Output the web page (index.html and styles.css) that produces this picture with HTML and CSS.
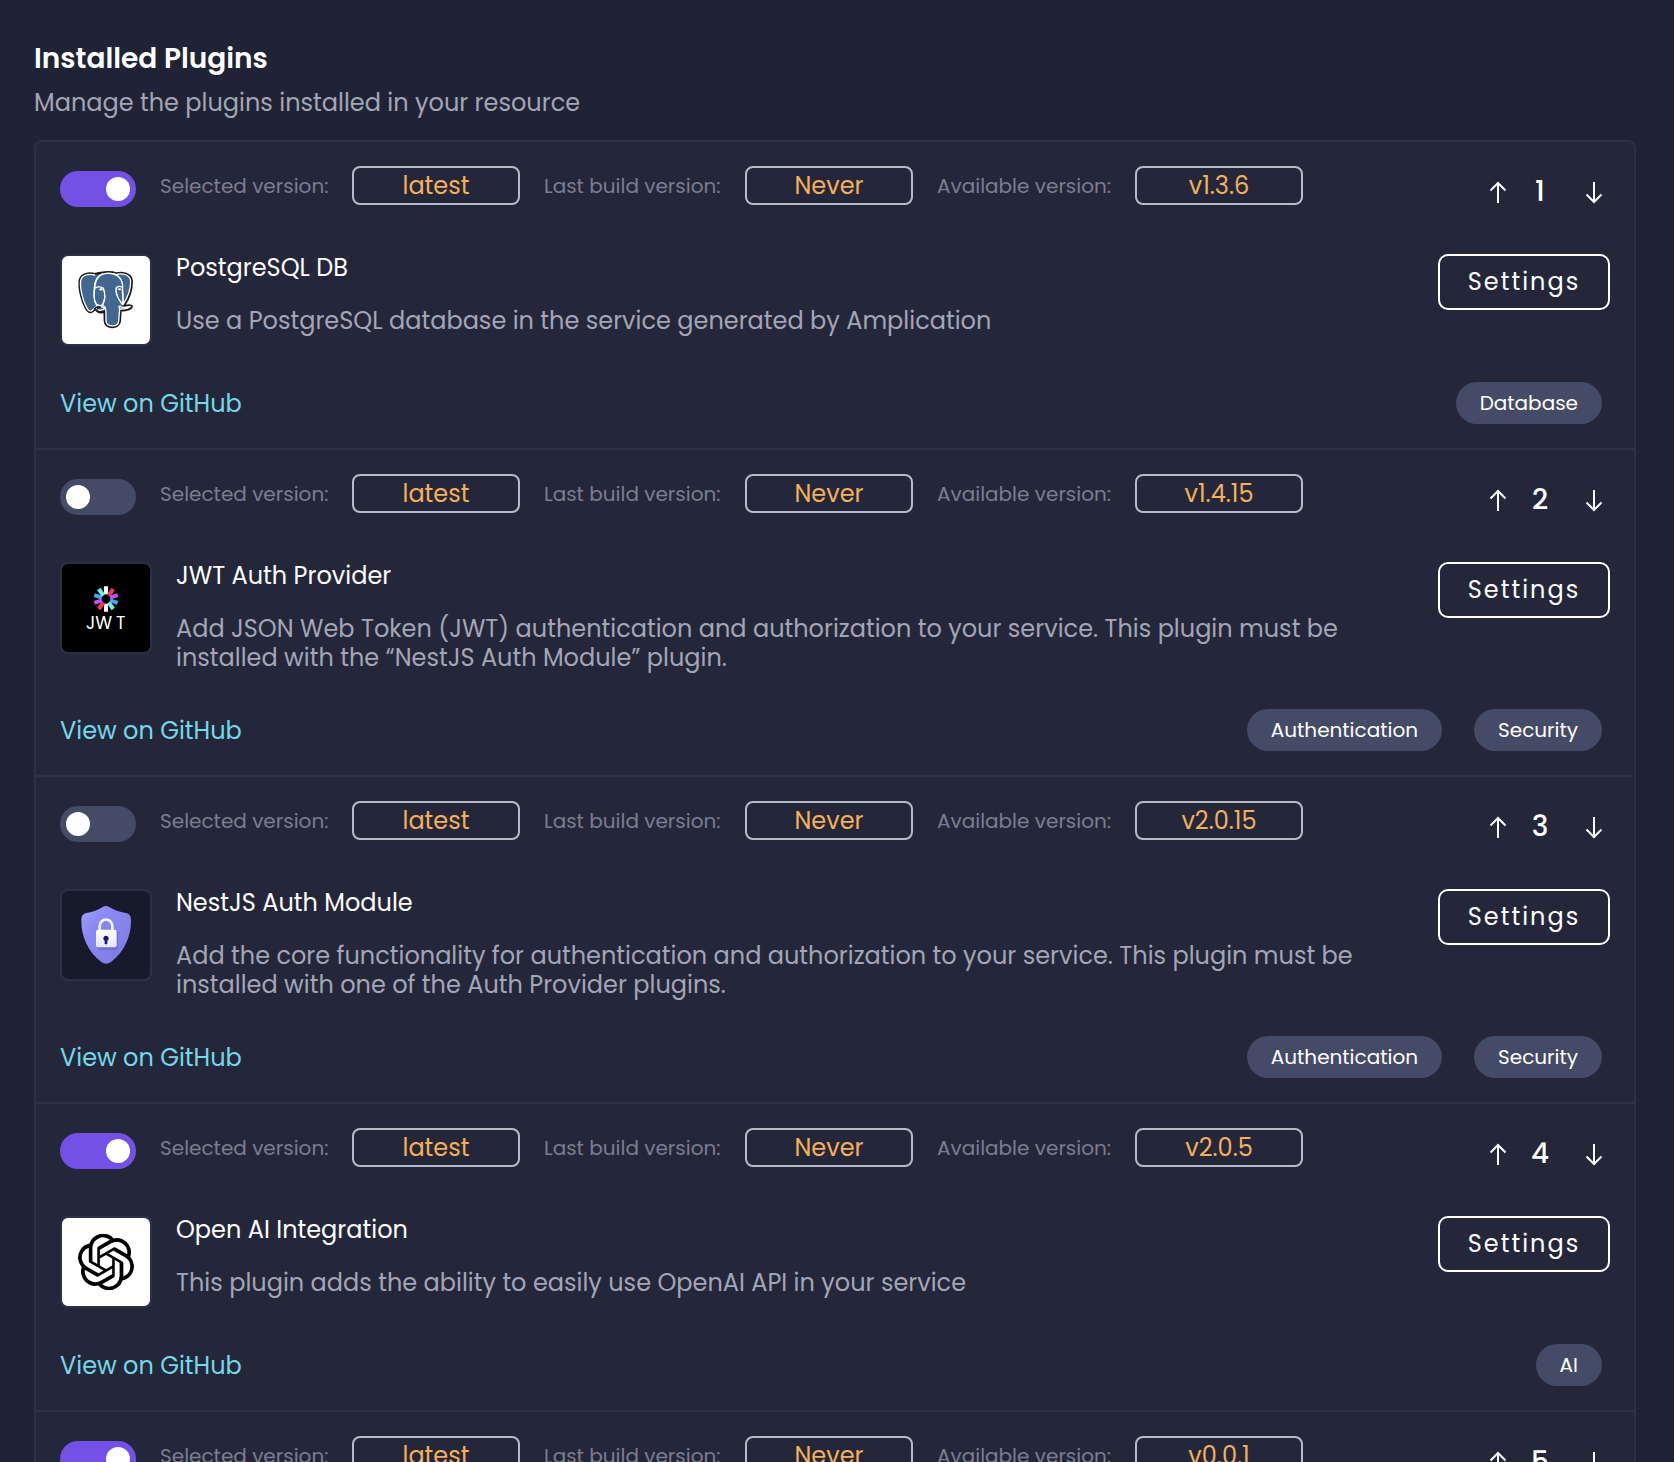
FILE: index.html
```html
<!DOCTYPE html>
<html lang="en">
<head>
<meta charset="utf-8">
<title>Installed Plugins</title>
<link rel="stylesheet" href="styles.css">
</head>
<body>
<svg class="sprite" aria-hidden="true">
  <symbol id="arrow-up" viewBox="0 0 20 24"><path d="M10 23V3M2.500 10.500 10 3 17.500 10.500"/></symbol>
  <symbol id="arrow-down" viewBox="0 0 20 24"><path d="M10 2v20M2.500 14.500 10 22 17.500 14.500"/></symbol>
</svg>
<main class="page">
  <header class="page-header">
    <h1 class="page-title">Installed Plugins</h1>
    <p class="page-subtitle">Manage the plugins installed in your resource</p>
  </header>

  <ul class="plugin-list">
    <li class="plugin">
      <div class="plugin-bar">
        <input class="toggle" type="checkbox" role="switch" aria-label="Enable PostgreSQL DB" checked>
        <dl class="versions">
          <dt>Selected version:</dt><dd>latest</dd>
          <dt>Last build version:</dt><dd>Never</dd>
          <dt>Available version:</dt><dd>v1.3.6</dd>
        </dl>
        <div class="order">
          <button class="order-button" aria-label="Move up"><svg><use href="#arrow-up"/></svg></button>
          <span class="order-number">1</span>
          <button class="order-button" aria-label="Move down"><svg><use href="#arrow-down"/></svg></button>
        </div>
      </div>
      <div class="plugin-body">
        <div class="logo logo-light">
          <svg viewBox="36 33 264 264" aria-hidden="true">
            <g stroke-linejoin="round" stroke-linecap="round">
              <path fill="#41668f" stroke="#1c1c1c" stroke-width="8" d="M134 88C119 84 94 85 90 106C86 131 97 168 106 185C112 198 119 203 126 199C132 196 136 191 140 188C136 201 153 203 164 200L165 229C165 250 207 252 209 229L211 196C223 196 243 193 245 184C239 180 229 184 222 181C235 162 245 133 245 108C243 86 217 82 199 86C181 79 147 83 134 88Z"/>
              <path fill="#41668f" stroke="#fff" stroke-width="4" d="M134 90C119 86 96 87 92 107C89 131 99 167 108 184C113 196 119 201 125 197C131 193 136 187 141 182C130 170 131 149 133 128C134 107 144 91 157 87M199 88C217 84 240 88 242 108C242 133 232 160 219 179C218 165 220 149 217 130C219 109 209 92 192 86"/>
              <path fill="#41668f" stroke="#fff" stroke-width="4" d="M134 130C136 103 145 87 169 85C198 83 216 98 218 123C215 140 221 157 218 178C204 162 196 146 198 130C203 122 213 123 217 128M134 130C143 124 154 125 160 130C166 143 167 165 157 179C152 185 142 180 139 177C131 167 132 146 134 130Z"/>
              <path fill="#41668f" stroke="none" d="M160 130C164 145 166 165 160 179L168 190V229C168 245 204 247 206 229L207 190L215 180C204 162 196 146 198 130Z"/>
              <path fill="none" stroke="#fff" stroke-width="4" d="M160 130C166 145 166 165 158 180C169 187 168 196 168 229C168 246 204 248 206 229L209 191C204 184 209 181 213 186C222 190 233 184 241 184C236 190 222 192 212 192M198 130C196 146 205 163 217 178M141 185C150 183 160 187 164 190C158 197 145 198 140 190"/>
              <path fill="none" stroke="#1c1c1c" stroke-width="4" d="M133 192C138 185 143 184 151 186L142 192"/>
            </g>
            <path fill="#fff" d="M147 132c4-3 9-3 12 0c-2 6-10 6-12 0zM203 132c3-3 8-3 11 0c-2 5-8 5-11 0z"/>
          </svg>
        </div>
        <div class="plugin-text">
          <h2 class="plugin-name">PostgreSQL DB</h2>
          <p class="plugin-description">Use a PostgreSQL database in the service generated by Amplication</p>
        </div>
        <button class="settings">Settings</button>
      </div>
      <footer class="plugin-footer">
        <a class="link" href="#">View on GitHub</a>
        <ul class="tags"><li>Database</li></ul>
      </footer>
    </li>

    <li class="plugin">
      <div class="plugin-bar">
        <input class="toggle" type="checkbox" role="switch" aria-label="Enable JWT Auth Provider">
        <dl class="versions">
          <dt>Selected version:</dt><dd>latest</dd>
          <dt>Last build version:</dt><dd>Never</dd>
          <dt>Available version:</dt><dd>v1.4.15</dd>
        </dl>
        <div class="order">
          <button class="order-button" aria-label="Move up"><svg><use href="#arrow-up"/></svg></button>
          <span class="order-number">2</span>
          <button class="order-button" aria-label="Move down"><svg><use href="#arrow-down"/></svg></button>
        </div>
      </div>
      <div class="plugin-body">
        <div class="logo logo-black">
          <svg viewBox="36 42 264 264" aria-hidden="true">
            <g transform="translate(168 147)" stroke-width="12">
              <path stroke="#fff" d="M0-14V-38M0 14V38"/>
              <path stroke="#f2355b" transform="rotate(36)" d="M0-13V-37M0 13V37"/>
              <path stroke="#c44df5" transform="rotate(72)" d="M0-13V-37M0 13V37"/>
              <path stroke="#48a9ea" transform="rotate(108)" d="M0-13V-37M0 13V37"/>
              <path stroke="#6ff0e4" transform="rotate(144)" d="M0-13V-37M0 13V37"/>
            </g>
            <text class="logo-word" x="108" y="237">J</text>
            <text class="logo-word" x="136" y="237">W</text>
            <text class="logo-word" x="198" y="237">T</text>
          </svg>
        </div>
        <div class="plugin-text">
          <h2 class="plugin-name">JWT Auth Provider</h2>
          <p class="plugin-description">Add JSON Web Token (JWT) authentication and authorization to your service. This plugin must be installed with the “NestJS Auth Module” plugin.</p>
        </div>
        <button class="settings">Settings</button>
      </div>
      <footer class="plugin-footer">
        <a class="link" href="#">View on GitHub</a>
        <ul class="tags"><li>Authentication</li><li>Security</li></ul>
      </footer>
    </li>

    <li class="plugin">
      <div class="plugin-bar">
        <input class="toggle" type="checkbox" role="switch" aria-label="Enable NestJS Auth Module">
        <dl class="versions">
          <dt>Selected version:</dt><dd>latest</dd>
          <dt>Last build version:</dt><dd>Never</dd>
          <dt>Available version:</dt><dd>v2.0.15</dd>
        </dl>
        <div class="order">
          <button class="order-button" aria-label="Move up"><svg><use href="#arrow-up"/></svg></button>
          <span class="order-number">3</span>
          <button class="order-button" aria-label="Move down"><svg><use href="#arrow-down"/></svg></button>
        </div>
      </div>
      <div class="plugin-body">
        <div class="logo logo-dark">
          <svg viewBox="36 33 264 264" aria-hidden="true">
            <defs>
              <linearGradient id="shield" x1="0" y1="0" x2="1" y2="1"><stop offset="0" stop-color="#a3a2fb"/><stop offset=".3" stop-color="#8b89f4"/><stop offset="1" stop-color="#7b79e0"/></linearGradient>
              <linearGradient id="lock" x1="0" y1="0" x2="0" y2="1"><stop offset="0" stop-color="#fff"/><stop offset="1" stop-color="#e4e4f0"/></linearGradient>
            </defs>
            <path fill="url(#shield)" d="M158 81Q168 75 178 81C193 92 212 96 231 100Q243 104 243 120C244 170 222 217 183 246Q168 256 154 246C115 217 93 170 94 120Q94 104 106 100C126 96 143 91 158 81Z"/>
            <path fill="#5f5dc8" opacity=".55" d="M142 154h62v47q0 8-8 8h-52z"/>
            <path fill="none" stroke="#f2f2fa" stroke-width="8" d="M149 154V138a19 19 0 0 1 38 0v16"/>
            <rect x="138" y="149" width="62" height="53" rx="6" fill="url(#lock)"/>
            <path fill="#17127c" d="M168 167a8 8 0 0 1 4 15v9q-4 3-8 0v-9a8 8 0 0 1 4-15z"/>
          </svg>
        </div>
        <div class="plugin-text">
          <h2 class="plugin-name">NestJS Auth Module</h2>
          <p class="plugin-description">Add the core functionality for authentication and authorization to your service. This plugin must be installed with one of the Auth Provider plugins.</p>
        </div>
        <button class="settings">Settings</button>
      </div>
      <footer class="plugin-footer">
        <a class="link" href="#">View on GitHub</a>
        <ul class="tags"><li>Authentication</li><li>Security</li></ul>
      </footer>
    </li>

    <li class="plugin">
      <div class="plugin-bar">
        <input class="toggle" type="checkbox" role="switch" aria-label="Enable Open AI Integration" checked>
        <dl class="versions">
          <dt>Selected version:</dt><dd>latest</dd>
          <dt>Last build version:</dt><dd>Never</dd>
          <dt>Available version:</dt><dd>v2.0.5</dd>
        </dl>
        <div class="order">
          <button class="order-button" aria-label="Move up"><svg><use href="#arrow-up"/></svg></button>
          <span class="order-number">4</span>
          <button class="order-button" aria-label="Move down"><svg><use href="#arrow-down"/></svg></button>
        </div>
      </div>
      <div class="plugin-body">
        <div class="logo logo-light">
          <svg viewBox="36 36 264 264" aria-hidden="true">
            <svg x="83" y="83" width="170" height="170" viewBox="0 0 24 24">
              <path d="M22.282 9.821a5.985 5.985 0 0 0-.516-4.910 6.046 6.046 0 0 0-6.510-2.900A6.065 6.065 0 0 0 4.981 4.182a5.985 5.985 0 0 0-3.998 2.900 6.046 6.046 0 0 0 .743 7.097 5.980 5.980 0 0 0 .510 4.911 6.051 6.051 0 0 0 6.515 2.900A5.985 5.985 0 0 0 13.260 24a6.056 6.056 0 0 0 5.772-4.206 5.990 5.990 0 0 0 3.998-2.900 6.056 6.056 0 0 0-.748-7.073zM13.260 22.430a4.476 4.476 0 0 1-2.876-1.041l.142-.080 4.778-2.758a.795.795 0 0 0 .393-.681v-6.737l2.020 1.169a.071.071 0 0 1 .038.052v5.583a4.504 4.504 0 0 1-4.495 4.493zM3.600 18.304a4.471 4.471 0 0 1-.535-3.014l.142.085 4.783 2.759a.771.771 0 0 0 .780 0l5.843-3.369v2.332a.080.080 0 0 1-.033.062L9.740 19.950a4.499 4.499 0 0 1-6.140-1.646zM2.341 7.896a4.485 4.485 0 0 1 2.366-1.973V11.600a.766.766 0 0 0 .388.677l5.814 3.354-2.020 1.169a.076.076 0 0 1-.071 0l-4.830-2.787A4.504 4.504 0 0 1 2.341 7.872zm16.596 3.856l-5.833-3.387L15.119 7.200a.076.076 0 0 1 .071 0l4.830 2.792a4.494 4.494 0 0 1-.676 8.104v-5.677a.790.790 0 0 0-.407-.667zm2.010-3.023l-.142-.085-4.773-2.782a.776.776 0 0 0-.785 0L9.409 9.230V6.897a.066.066 0 0 1 .028-.061l4.830-2.787a4.499 4.499 0 0 1 6.680 4.660zM8.307 12.863l-2.020-1.164a.080.080 0 0 1-.038-.057V6.074a4.499 4.499 0 0 1 7.375-3.453l-.142.080L8.704 5.459a.795.795 0 0 0-.393.681zm1.097-2.366l2.602-1.500 2.607 1.500v2.999l-2.597 1.500-2.607-1.500z"/>
            </svg>
          </svg>
        </div>
        <div class="plugin-text">
          <h2 class="plugin-name">Open AI Integration</h2>
          <p class="plugin-description">This plugin adds the ability to easily use OpenAI API in your service</p>
        </div>
        <button class="settings">Settings</button>
      </div>
      <footer class="plugin-footer">
        <a class="link" href="#">View on GitHub</a>
        <ul class="tags"><li>AI</li></ul>
      </footer>
    </li>

    <li class="plugin">
      <div class="plugin-bar">
        <input class="toggle" type="checkbox" role="switch" aria-label="Enable plugin" checked>
        <dl class="versions">
          <dt>Selected version:</dt><dd>latest</dd>
          <dt>Last build version:</dt><dd>Never</dd>
          <dt>Available version:</dt><dd>v0.0.1</dd>
        </dl>
        <div class="order">
          <button class="order-button" aria-label="Move up"><svg><use href="#arrow-up"/></svg></button>
          <span class="order-number">5</span>
          <button class="order-button" aria-label="Move down"><svg><use href="#arrow-down"/></svg></button>
        </div>
      </div>
    </li>
  </ul>
</main>
</body>
</html>
```

FILE: styles.css
```css
* {
  box-sizing: border-box;
}

body {
  margin: 0;
  background: #202335;
  color: #fff;
  font-family: Poppins, Inter, "Noto Sans", sans-serif;
  font-size: 24px;
}

h1,
h2,
p,
ul,
dl,
dd {
  margin: 0;
  padding: 0;
}

ul {
  list-style: none;
}

button {
  background: none;
  color: inherit;
  font: inherit;
  cursor: pointer;
}

.sprite {
  display: none;
}

.page {
  height: 100vh;
  overflow: hidden;
  padding: 40px 38px 0 34px;
}

.page-header {
  height: 100px;
}

.page-title {
  font-size: 28px;
  font-weight: 600;
  line-height: 37px;
}

.page-subtitle {
  margin-top: 8px;
  color: #a3a6b6;
  line-height: 36px;
}

.plugin-list {
  border: 2px solid #2d3146;
  border-radius: 8px;
  background: #24273a;
}

.plugin {
  padding: 24px;
  border-bottom: 2px solid #2d3146;
}

.plugin-bar {
  display: flex;
  align-items: flex-start;
  gap: 24px;
  height: 88px;
}

.toggle {
  appearance: none;
  flex: none;
  width: 76px;
  height: 36px;
  margin: 5px 0 0;
  padding: 6px;
  border-radius: 18px;
  background: #444b66;
  cursor: pointer;
}

.toggle::before {
  content: "";
  display: block;
  width: 24px;
  height: 24px;
  border-radius: 50%;
  background: #fff;
}

.toggle:checked {
  background: #7451e6;
}

.toggle:checked::before {
  margin-left: auto;
}

.versions {
  display: grid;
  grid-template-columns: 168px 168px 177px 168px 174px 168px;
  column-gap: 24px;
  align-items: center;
}

.versions dt {
  color: #7a7e90;
  font-size: 20px;
  white-space: nowrap;
}

.versions dd {
  border: 2px solid #b8bac8;
  border-radius: 8px;
  color: #f4b05a;
  line-height: 35px;
  text-align: center;
}

.order {
  display: flex;
  align-items: center;
  gap: 12px;
  height: 52px;
  margin-left: auto;
}

.order-button {
  display: flex;
  padding: 6px;
  border: 0;
}

.order-button svg {
  width: 20px;
  height: 24px;
  fill: none;
  stroke: #fff;
  stroke-width: 2;
}

.order-number {
  width: 28px;
  margin-right: 12px;
  font-size: 28px;
  font-weight: 500;
  text-align: center;
}

.plugin-body {
  display: flex;
  align-items: flex-start;
  gap: 24px;
}

.logo {
  flex: none;
  width: 92px;
  height: 92px;
  border: 2px solid #2d3146;
  border-radius: 8px;
  overflow: hidden;
}

.logo svg {
  display: block;
}

.logo-light {
  background: #fff;
}

.logo-black {
  background: #000;
}

.logo-dark {
  background: #171a2b;
}

.logo-word {
  fill: #fff;
  font-size: 52px;
  font-weight: 400;
}

.plugin-text {
  flex: 1;
  padding-bottom: 1px;
}

.plugin-name {
  font-size: 24px;
  font-weight: 400;
  line-height: 28px;
}

.plugin-description {
  margin-top: 24px;
  color: #a3a6b6;
  line-height: 29px;
}

.settings {
  flex: none;
  width: 172px;
  height: 56px;
  padding-bottom: 3px;
  border: 2px solid #fff;
  border-radius: 10px;
  font-weight: 400;
  letter-spacing: 2px;
}

.plugin-footer {
  display: flex;
  justify-content: space-between;
  align-items: center;
  margin-top: 36px;
}

.link {
  color: #74d8e8;
  text-decoration: none;
}

.tags {
  display: flex;
  gap: 32px;
  margin-right: 8px;
}

.tags li {
  padding: 0 24px;
  border-radius: 21px;
  background: #444b66;
  font-size: 20px;
  font-weight: 400;
  line-height: 42px;
}
```
